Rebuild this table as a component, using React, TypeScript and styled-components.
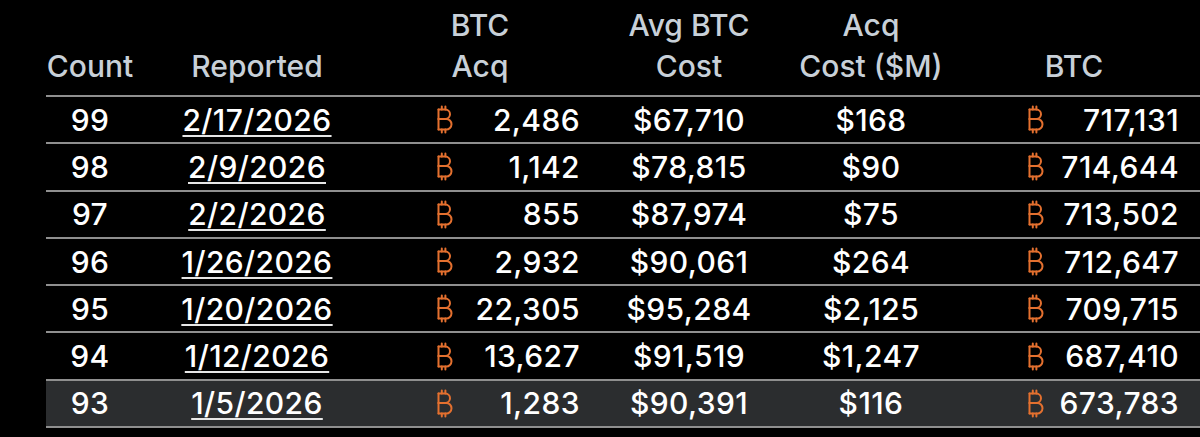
import styled, { createGlobalStyle } from 'styled-components'

const GlobalStyle = createGlobalStyle`
  html, body {
    margin: 0;
    padding: 0;
    background: #000;
    overflow: hidden;
  }
  body {
    font-family: Inter, "Liberation Sans", sans-serif;
  }
`

const Page = styled.main`
  width: 1200px;
  height: 437px;
  background: #000;
  padding-left: 46px;
  box-sizing: border-box;
  overflow: hidden;
`

const columns = '88px 246px 200px 218px 146px 260px'

const Table = styled.div`
  width: 1158px;
  display: flex;
  flex-direction: column;
`

const HeaderRow = styled.div`
  display: grid;
  grid-template-columns: ${columns};
  height: 97px;
  box-sizing: border-box;
  padding-bottom: 8px;
  border-bottom: 2px solid #8f8f8f;
  align-items: end;
`

const HeaderCell = styled.div`
  color: #c8d0d8;
  font-size: 30px;
  font-weight: 500;
  line-height: 41px;
  text-align: center;
  white-space: nowrap;
  display: flex;
  flex-direction: column;
  align-items: center;
`

const Row = styled.div<{ $highlight?: boolean }>`
  display: grid;
  grid-template-columns: ${columns};
  height: 47.3px;
  box-sizing: border-box;
  border-bottom: 2px solid #8f8f8f;
  align-items: center;
  background: ${(p) => (p.$highlight ? '#2b2d2f' : 'transparent')};
`

const Cell = styled.div`
  color: #fff;
  font-size: 30px;
  font-weight: 500;
  text-align: center;
  white-space: nowrap;
  letter-spacing: 0.4px;
`

const DateLink = styled.span`
  text-decoration: underline;
  text-decoration-color: #e6e6e6;
  text-decoration-thickness: 2px;
  text-underline-offset: 4px;
`

const BtcCell = styled.div<{ $left: number; $right: number }>`
  display: flex;
  align-items: center;
  justify-content: space-between;
  padding-left: ${(p) => p.$left}px;
  padding-right: ${(p) => p.$right}px;
  color: #fff;
  font-size: 30px;
  font-weight: 500;
  letter-spacing: 0.4px;
  white-space: nowrap;
`

function BitcoinMark() {
  return (
    <svg width="17" height="29" viewBox="0 0 17 29" fill="none" stroke="#e4702f" strokeWidth="2" strokeLinecap="round">
      <path d="M2.5 4.5V24.5" />
      <path d="M2.5 4.5H9.3a4.7 4.7 0 0 1 0 9.4H2.5" />
      <path d="M2.5 13.9H10.2a5.3 5.3 0 0 1 0 10.6H2.5" />
      <path d="M5.8 1.5V4.5M9.4 1.5V4.5M5.8 24.5V27.5M9.4 24.5V27.5" />
    </svg>
  )
}

const rows = [
  { count: 99, date: '2/17/2026', acq: '2,486', avg: '$67,710', cost: '$168', total: '717,131' },
  { count: 98, date: '2/9/2026', acq: '1,142', avg: '$78,815', cost: '$90', total: '714,644' },
  { count: 97, date: '2/2/2026', acq: '855', avg: '$87,974', cost: '$75', total: '713,502' },
  { count: 96, date: '1/26/2026', acq: '2,932', avg: '$90,061', cost: '$264', total: '712,647' },
  { count: 95, date: '1/20/2026', acq: '22,305', avg: '$95,284', cost: '$2,125', total: '709,715' },
  { count: 94, date: '1/12/2026', acq: '13,627', avg: '$91,519', cost: '$1,247', total: '687,410' },
  { count: 93, date: '1/5/2026', acq: '1,283', avg: '$90,391', cost: '$116', total: '673,783' },
]

export default function App() {
  return (
    <Page>
      <GlobalStyle />
      <Table>
        <HeaderRow>
          <HeaderCell>Count</HeaderCell>
          <HeaderCell>Reported</HeaderCell>
          <HeaderCell><span>BTC</span><span>Acq</span></HeaderCell>
          <HeaderCell><span>Avg BTC</span><span>Cost</span></HeaderCell>
          <HeaderCell><span>Acq</span><span>Cost ($M)</span></HeaderCell>
          <HeaderCell>BTC</HeaderCell>
        </HeaderRow>
        {rows.map((r, i) => (
          <Row key={r.count} $highlight={i === rows.length - 1}>
            <Cell>{r.count}</Cell>
            <Cell><DateLink>{r.date}</DateLink></Cell>
            <BtcCell $left={56} $right={0}>
              <BitcoinMark />
              <span>{r.acq}</span>
            </BtcCell>
            <Cell>{r.avg}</Cell>
            <Cell>{r.cost}</Cell>
            <BtcCell $left={83} $right={25}>
              <BitcoinMark />
              <span>{r.total}</span>
            </BtcCell>
          </Row>
        ))}
      </Table>
    </Page>
  )
}
